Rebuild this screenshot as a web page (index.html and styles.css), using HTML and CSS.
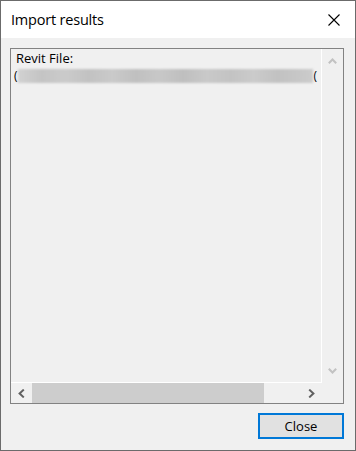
FILE: index.html
```html
<!DOCTYPE html>
<html>
<head>
<meta charset="utf-8">
<link rel="stylesheet" href="styles.css">
</head>
<body>
<div class="window">
  <div class="titlebar">
    <span class="title">Import results</span>
    <svg class="close-x" width="12" height="12" viewBox="0 0 12 12"><path d="M0.5 0.5 L11.5 11.5 M11.5 0.5 L0.5 11.5" stroke="#000" stroke-width="1.1" fill="none"/></svg>
  </div>
  <div class="body">
    <div class="listbox">
      <div class="main-row">
        <div class="textarea">
          <div class="line">Revit File:</div>
          <div class="line path"><span class="edge">(</span><span class="blur"></span><span class="edge">(</span></div>
        </div>
        <div class="vscroll">
          <svg width="9" height="6" viewBox="0 0 9 6"><path d="M0.8 5.2 L4.5 1.5 L8.2 5.2" stroke="#c2c2c2" stroke-width="2" fill="none"/></svg>
          <svg width="9" height="6" viewBox="0 0 9 6"><path d="M0.8 0.8 L4.5 4.5 L8.2 0.8" stroke="#c2c2c2" stroke-width="2" fill="none"/></svg>
        </div>
      </div>
      <div class="bottom-row">
        <div class="hscroll">
          <div class="arrow-btn">
            <svg width="7" height="9" viewBox="0 0 7 9"><path d="M5.8 0.6 L1.6 4.5 L5.8 8.4" stroke="#606060" stroke-width="2" fill="none"/></svg>
          </div>
          <div class="track"><div class="thumb"></div></div>
          <div class="arrow-btn">
            <svg width="7" height="9" viewBox="0 0 7 9"><path d="M1.2 0.6 L5.4 4.5 L1.2 8.4" stroke="#606060" stroke-width="2" fill="none"/></svg>
          </div>
        </div>
        <div class="corner"></div>
      </div>
    </div>
    <div class="footer">
      <button class="btn">Close</button>
    </div>
  </div>
</div>
</body>
</html>
```
FILE: styles.css
```css
html, body {
  margin: 0;
  padding: 0;
  background: #f0f0f0;
}
.window {
  box-sizing: border-box;
  width: 356px;
  height: 451px;
  border: 1px solid #6b6b6b;
  background: #f0f0f0;
  display: flex;
  flex-direction: column;
  font-family: "Open Sans", "Noto Sans", "Liberation Sans", sans-serif;
}
.titlebar {
  height: 37px;
  background: #ffffff;
  display: flex;
  align-items: center;
  justify-content: space-between;
  padding: 0 15px 0 10px;
}
.title {
  font-size: 14.5px;
  color: #000;
  letter-spacing: -0.2px;
  margin-top: -1px;
}
.close-x {
  display: block;
  margin-top: 1px;
}
.body {
  padding: 10px 11px 0 9px;
  display: flex;
  flex-direction: column;
}
.listbox {
  box-sizing: border-box;
  width: 334px;
  height: 356px;
  border: 1px solid #828282;
  display: flex;
  flex-direction: column;
}
.main-row {
  flex: 1;
  display: flex;
  min-height: 0;
}
.textarea {
  flex: 1;
  border-right: 1px solid #ffffff;
  padding: 1px 0 0 5px;
  overflow: hidden;
  font-size: 13px;
  color: #000;
}
.line {
  height: 17px;
  line-height: 17px;
  white-space: nowrap;
}
.path {
  display: flex;
  align-items: center;
  margin-left: -2px;
}
.edge {
  font-size: 12px;
  color: #000;
}
.blur {
  display: block;
  width: 295px;
  height: 14px;
  margin: 1px 1px 0 0;
  background: linear-gradient(90deg, #d2d2d2 0%, #c4c4c4 8%, #cbcbcb 16%, #c2c2c2 24%, #cacaca 32%, #c0c0c0 40%, #c8c8c8 48%, #bfbfbf 56%, #c9c9c9 64%, #c3c3c3 72%, #cbcbcb 80%, #c2c2c2 88%, #c8c8c8 96%, #cccccc 100%);
  filter: blur(1px);
}
.vscroll {
  width: 21px;
  display: flex;
  flex-direction: column;
  justify-content: space-between;
  align-items: center;
  padding: 9px 0 8px;
}
.vscroll svg {
  display: block;
}
.bottom-row {
  height: 21px;
  display: flex;
}
.hscroll {
  flex: 1;
  display: flex;
  border-top: 1px solid #ffffff;
  height: 20px;
}
.arrow-btn {
  width: 21px;
  display: flex;
  align-items: center;
  justify-content: center;
}
.arrow-btn svg {
  display: block;
}
.track {
  flex: 1;
  display: flex;
}
.thumb {
  width: 232px;
  background: #cdcdcd;
}
.corner {
  width: 21px;
  background: #f0f0f0;
}
.footer {
  display: flex;
  justify-content: flex-end;
  padding-top: 9px;
}
.btn {
  box-sizing: border-box;
  width: 86px;
  height: 26px;
  border: 2px solid #0078d7;
  background: #e1e1e1;
  font-family: "Open Sans", "Noto Sans", "Liberation Sans", sans-serif;
  font-size: 13px;
  color: #000;
  padding: 0;
  margin: 0;
}
```
